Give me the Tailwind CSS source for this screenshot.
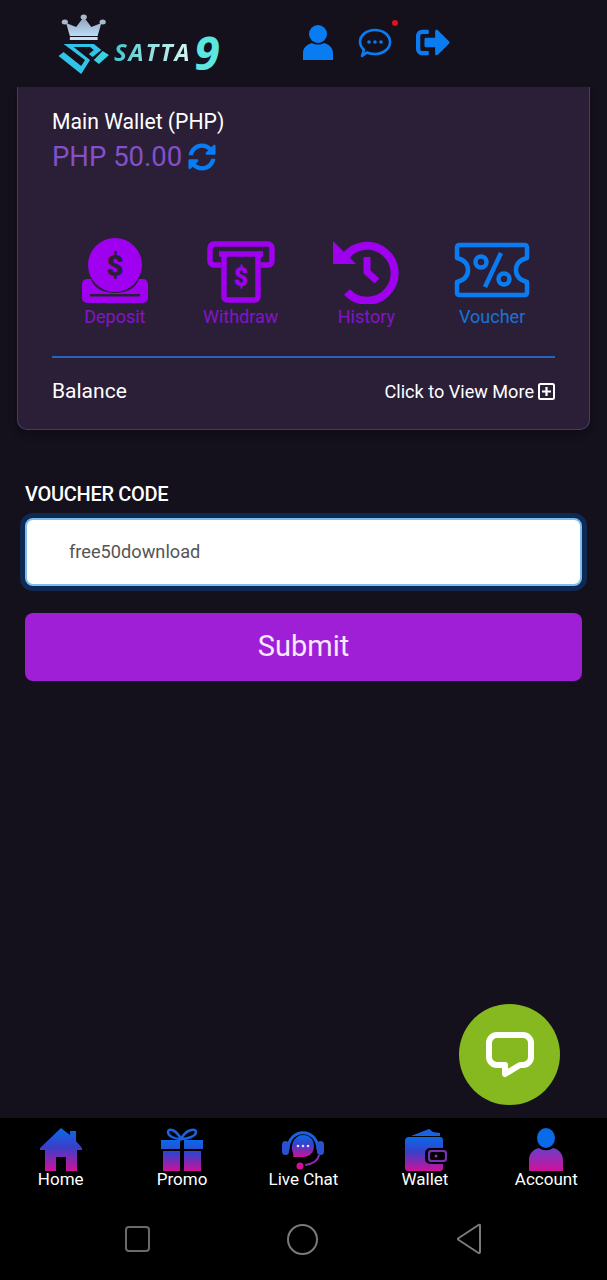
<!DOCTYPE html>
<html lang="en">
<head>
  <meta charset="UTF-8">
  <meta name="viewport" content="width=device-width, initial-scale=1.0">
  <title>Voucher</title>
  <script src="https://cdn.jsdelivr.net/npm/@tailwindcss/browser@4"></script>
</head>
<body class="bg-[#14101c] font-['Roboto',sans-serif] text-white">
<div class="relative h-[1280px] w-[607px] overflow-hidden flex flex-col">

  <!-- svg gradients shared by the nav icons -->
  <svg class="absolute w-0 h-0">
    <defs>
      <linearGradient id="navGrad" x1="0" y1="0" x2="0" y2="1">
        <stop offset="0" stop-color="#0a6ae8"/>
        <stop offset="0.45" stop-color="#3a3fc8"/>
        <stop offset="1" stop-color="#d0109a"/>
      </linearGradient>
      <linearGradient id="bodyGrad" x1="0" y1="0" x2="0" y2="1">
        <stop offset="0" stop-color="#6a3fc8"/>
        <stop offset="1" stop-color="#d0109a"/>
      </linearGradient>
      <linearGradient id="crownGrad" x1="0" y1="0" x2="0" y2="1">
        <stop offset="0" stop-color="#8f9fb8"/>
        <stop offset="1" stop-color="#bcdcf8"/>
      </linearGradient>
    </defs>
  </svg>

  <!-- header -->
  <header class="h-[87px] shrink-0 flex items-start">
    <div class="ml-[56px] mt-[12px] w-[166px] h-[64px] flex items-end">
      <svg class="w-[58px] h-[62px] shrink-0" viewBox="0 0 46 62" preserveAspectRatio="none">
        <g transform="translate(2 0)">
          <path d="M9 22 L6 9 L14 13 L20 3 L26 13 L34 9 L31 22 Z" fill="url(#crownGrad)"/>
          <circle cx="20" cy="3" r="2.500" fill="#a9b8cc"/><circle cx="5" cy="8" r="2.500" fill="#a9b8cc"/><circle cx="35" cy="8" r="2.500" fill="#a9b8cc"/>
          <rect x="9" y="23" width="22" height="3" fill="#c4e0f8"/>
        </g>
        <path d="M6 30 H30 L36 36 L29 43 L26 40 L30 36 L27 33 H14 L27 46 L20 60 L2 42 L6 38 L20 52 L23 46 Z" fill="#2fc4e8"/>
        <path d="M37 37 L42 41 L34 50 L30 46 Z" fill="#39d0e0"/>
      </svg>
      <div class="mb-[4px] flex items-center h-[40px] italic font-bold leading-none font-['Open_Sans',sans-serif]">
        <span class="text-[24px] tracking-[1.800px] bg-linear-to-r from-[#38c8d0] to-[#d8f6f0] bg-clip-text text-transparent">SATTA</span>
        <span class="text-[46px] ml-[3px] text-[#5ce6e0]">9</span>
      </div>
    </div>
    <div class="ml-[81px] mt-[25px] flex items-start">
      <svg class="w-[30px] h-[35px]" viewBox="0 0 30 35" fill="#0a7cf2">
        <circle cx="15" cy="9" r="9"/>
        <path d="M0 35 V28 C0 22 5 19 9 18 C12 20 18 20 21 18 C25 19 30 22 30 28 V35 Z"/>
      </svg>
      <div class="relative ml-[25px] mt-[3px]">
        <svg class="w-[34px] h-[30px]" viewBox="0 0 34 30" fill="none">
          <path d="M4 28 L6 22 C3 19 2 16.500 2 14 C2 7 9 2 17 2 C25 2 32 7 32 14 C32 21 25 26 17 26 C14 26 11 25.500 9 24.500 Z" stroke="#0a7cf2" stroke-width="2.600" stroke-linejoin="round"/>
          <circle cx="11" cy="14" r="1.800" fill="#0a7cf2"/><circle cx="17" cy="14" r="1.800" fill="#0a7cf2"/><circle cx="23" cy="14" r="1.800" fill="#0a7cf2"/>
        </svg>
        <span class="absolute right-[-6px] top-[-8px] w-[6px] h-[6px] rounded-full bg-[#e01020]"></span>
      </div>
      <svg class="w-[34px] h-[27px] ml-[24px] mt-[4px]" viewBox="0 0 512 400">
        <path transform="translate(0 -56)" fill="#0a7cf2" d="M497 273L329 441c-15 15-41 4.500-41-17v-96H152c-13.300 0-24-10.700-24-24v-96c0-13.300 10.700-24 24-24h136V88c0-21.400 25.900-32 41-17l168 168c9.300 9.400 9.300 24.600 0 34zM192 436v-40c0-6.600-5.400-12-12-12H96c-17.700 0-32-14.300-32-32V160c0-17.700 14.300-32 32-32h84c6.600 0 12-5.400 12-12V76c0-6.600-5.400-12-12-12H96c-53 0-96 43-96 96v192c0 53 43 96 96 96h84c6.600 0 12-5.400 12-12z"/>
      </svg>
    </div>
  </header>

  <!-- wallet card -->
  <section class="mx-[17px] h-[343px] shrink-0 bg-[#2b1f38] border border-t-0 border-[#4a3a68] rounded-b-[10px] px-[34px] shadow-[0_4px_8px_rgba(0,0,0,0.25)]">
    <p class="mt-[21px] text-[21.200px] leading-[28px]">Main Wallet (PHP)</p>
    <div class="mt-[3px] flex items-center h-[36px]">
      <span class="text-[27.500px] leading-[36px] text-[#8350c8]">PHP 50.00</span>
      <svg class="w-[28px] h-[28px] ml-[6px]" viewBox="0 0 512 512">
        <path fill="#0a7cf2" d="M370.720 133.280C339.458 104.008 298.888 87.962 255.848 88c-77.458.068-144.328 53.178-162.791 126.850-1.344 5.363-6.122 9.150-11.651 9.150H24.103c-7.498 0-13.194-6.807-11.807-14.176C33.933 94.924 134.813 8 256 8c66.448 0 126.791 26.136 171.315 68.685L463.030 40.970C478.149 25.851 504 36.559 504 57.941V192c0 13.255-10.745 24-24 24H345.941c-21.382 0-32.090-25.851-16.971-40.971l41.750-41.749zM32 296h134.059c21.382 0 32.090 25.851 16.971 40.971l-41.750 41.750c31.262 29.273 71.835 45.319 114.876 45.280 77.418-.07 144.315-53.144 162.787-126.849 1.344-5.363 6.122-9.150 11.651-9.150h57.304c7.498 0 13.194 6.807 11.807 14.176C478.067 417.076 377.187 504 256 504c-66.448 0-126.791-26.136-171.315-68.685L48.970 471.030C33.851 486.149 8 475.441 8 454.059V320c0-13.255 10.745-24 24-24z"/>
      </svg>
    </div>

    <div class="mt-[63px] grid grid-cols-4 h-[93px]">
      <div class="flex flex-col items-center">
        <svg class="w-[68px] h-[66px]" viewBox="0 0 68 66">
          <path d="M6 41 H10 C13 50 22 55 34 55 C46 55 55 50 58 41 H62 A5 5 0 0 1 67 46 V60 A5 5 0 0 1 62 65 H6 A5 5 0 0 1 1 60 V46 A5 5 0 0 1 6 41 Z" fill="#a000f0"/>
          <circle cx="34" cy="27" r="27" fill="#a000f0"/>
          <rect x="9" y="56" width="50" height="2.500" fill="#2b1f38"/>
          <text x="34" y="38" text-anchor="middle" font-family="Roboto, sans-serif" font-weight="900" font-size="30" fill="#2b1f38">$</text>
        </svg>
        <span class="mt-[1px] text-[18px] leading-[24px] text-[#8314c8]">Deposit</span>
      </div>
      <div class="flex flex-col items-center">
        <svg class="w-[68px] h-[66px]" viewBox="0 0 68 66" fill="none">
          <path d="M14 27 H7 A4 4 0 0 1 3 23 V10 A4 4 0 0 1 7 6 H61 A4 4 0 0 1 65 10 V23 A4 4 0 0 1 61 27 H54" stroke="#a000f0" stroke-width="5.500"/>
          <path d="M12 16 H56" stroke="#a000f0" stroke-width="5.500"/>
          <path d="M17 16 V59 A3 3 0 0 0 20 62 H48 A3 3 0 0 0 51 59 V16" stroke="#a000f0" stroke-width="5.500"/>
          <text x="34" y="48" text-anchor="middle" font-family="Roboto, sans-serif" font-weight="900" font-size="25" fill="#a000f0">$</text>
        </svg>
        <span class="mt-[1px] text-[18px] leading-[24px] text-[#8314c8]">Withdraw</span>
      </div>
      <div class="flex flex-col items-center">
        <svg class="w-[68px] h-[66px]" viewBox="0 0 68 66" fill="none">
          <path d="M13 19 A27.500 27.500 0 1 1 15 54" stroke="#a000f0" stroke-width="8"/>
          <path d="M1 3 L24 26 H1 Z" fill="#a000f0"/>
          <path d="M35 19 V34 L45 43" stroke="#a000f0" stroke-width="7"/>
        </svg>
        <span class="mt-[1px] text-[18px] leading-[24px] text-[#8314c8]">History</span>
      </div>
      <div class="flex flex-col items-center">
        <svg class="w-[76px] h-[66px]" viewBox="0 0 76 66" fill="none">
          <path d="M5 7 H71 A2 2 0 0 1 73 9 V20 C65 22 62 27 62 32 C62 37 65 42 73 44 V55 A2 2 0 0 1 71 57 H5 A2 2 0 0 1 3 55 V44 C11 42 14 37 14 32 C14 27 11 22 3 20 V9 A2 2 0 0 1 5 7 Z" stroke="#0a7cf2" stroke-width="4.500" stroke-linejoin="round"/>
          <circle cx="27" cy="24" r="5.500" stroke="#0a7cf2" stroke-width="4.500"/>
          <circle cx="50" cy="41" r="5.500" stroke="#0a7cf2" stroke-width="4.500"/>
          <path d="M47 15 L31 49" stroke="#0a7cf2" stroke-width="4.500"/>
        </svg>
        <span class="mt-[1px] text-[18px] leading-[24px] text-[#1a72d8]">Voucher</span>
      </div>
    </div>

    <div class="mt-[25px] h-[2px] bg-[#2a62b8]"></div>
    <div class="mt-[20px] flex items-center justify-between h-[28px]">
      <span class="text-[21px]">Balance</span>
      <span class="flex items-center text-[18.100px]">Click to View More
        <svg class="w-[17px] h-[17px] ml-[4px]" viewBox="0 0 17 17" fill="none" stroke="#ffffff">
          <rect x="1" y="1" width="15" height="15" rx="1.500" stroke-width="2"/>
          <path d="M8.500 4 V13 M4 8.500 H13" stroke-width="2.200"/>
        </svg>
      </span>
    </div>
  </section>

  <!-- voucher form -->
  <form class="mx-[25px] mt-[51px] shrink-0">
    <label class="block text-[20px] leading-[26px] font-medium tracking-[-0.3px]">VOUCHER CODE</label>
    <input type="text" value="free50download" class="mt-[11px] block w-full h-[68px] bg-white text-[18.200px] text-[#555555] pl-[42px] pb-[2px] rounded-[8px] border-2 border-[#7cc0ea] shadow-[0_0_0_5px_#0e2a54] font-['Roboto',sans-serif] outline-none">
    <button type="button" class="mt-[27px] block w-full h-[68px] bg-[#9f1fd6] rounded-[8px] text-[29px] text-[#f8e8ff]">Submit</button>
  </form>

  <!-- livechat bubble -->
  <button class="absolute left-[459px] top-[1004px] w-[101px] h-[101px] rounded-full bg-[#86b81f] flex items-center justify-center">
    <svg class="w-[48px] h-[46px]" viewBox="0 0 48 46" fill="none">
      <path d="M11 3 H37 A8 8 0 0 1 45 11 V25 A8 8 0 0 1 37 33 H34 L19 42 V33 H11 A8 8 0 0 1 3 25 V11 A8 8 0 0 1 11 3 Z" stroke="#ffffff" stroke-width="6" stroke-linejoin="round"/>
    </svg>
  </button>

  <!-- bottom nav + android buttons -->
  <div class="mt-auto bg-black shrink-0 h-[162px]">
    <nav class="grid grid-cols-5 h-[87px] pt-[10px]">
      <a class="flex flex-col items-center">
        <svg class="w-[44px] h-[43px]" viewBox="0 0 44 43" fill="url(#navGrad)">
          <path d="M22 0 L31 7 V3 H37 V13 L43 20 V22 H38 V43 H27 V29 H17 V43 H6 V22 H1 V20 Z"/>
        </svg>
        <span class="text-[17px] leading-[22px] -mt-[3px]">Home</span>
      </a>
      <a class="flex flex-col items-center">
        <svg class="w-[44px] h-[43px]" viewBox="0 0 44 43" fill="none">
          <g fill="url(#navGrad)">
            <path d="M1 12 H20 V21 H1 Z M24 12 H43 V21 H24 Z M3 23 H20 V43 H3 Z M24 23 H41 V43 H24 Z"/>
          </g>
          <path d="M21 11 C14 11 8 8 8 4 C8 0 16 1 21 11 C26 1 36 0 36 4 C36 8 28 11 21 11" stroke="#1a62e0" stroke-width="2.500"/>
        </svg>
        <span class="text-[17px] leading-[22px] -mt-[3px]">Promo</span>
      </a>
      <a class="flex flex-col items-center">
        <svg class="w-[44px] h-[43px]" viewBox="0 0 44 43" fill="none">
          <path d="M7 22 C7 -1 37 -1 37 22" stroke="#1a62e0" stroke-width="3"/>
          <rect x="1" y="13" width="7" height="14" rx="3.500" fill="#2a52d0"/>
          <rect x="36" y="13" width="7" height="14" rx="3.500" fill="#2a52d0"/>
          <path d="M22 7 C30 7 33 13 33 18 C33 25 28 29 22 29 H12 C13 27 12 25 11 22 C10 14 15 7 22 7 Z" fill="url(#navGrad)"/>
          <circle cx="17" cy="18" r="1.300" fill="#dbe4ff"/><circle cx="22" cy="18" r="1.300" fill="#dbe4ff"/><circle cx="27" cy="18" r="1.300" fill="#dbe4ff"/>
          <path d="M38 27 C37 33 31 36 24 37" stroke="#8a2ab0" stroke-width="2"/>
          <circle cx="19" cy="38" r="3.500" fill="#d0109a"/>
        </svg>
        <span class="text-[17px] leading-[22px] -mt-[3px]">Live Chat</span>
      </a>
      <a class="flex flex-col items-center">
        <svg class="w-[44px] h-[43px]" viewBox="0 0 44 43">
          <path d="M8 8 L26 1 L30 4 L37 5 V8 Z" fill="#1a62e0"/>
          <path d="M2 12 A4 4 0 0 1 6 9 H37 A3 3 0 0 1 40 12 V20 H27 A5 5 0 0 0 22 25 V31 A5 5 0 0 0 27 36 H40 V40 A3 3 0 0 1 37 43 H5 A3 3 0 0 1 2 40 Z" fill="url(#navGrad)"/>
          <rect x="25" y="22" width="19" height="12" rx="3" fill="#7a30b8"/>
          <rect x="27" y="24" width="15" height="8" rx="2" fill="#000000"/>
          <circle cx="33" cy="28" r="1.500" fill="#9a30b0"/>
        </svg>
        <span class="text-[17px] leading-[22px] -mt-[3px]">Wallet</span>
      </a>
      <a class="flex flex-col items-center">
        <svg class="w-[44px] h-[43px]" viewBox="0 0 44 43">
          <ellipse cx="22" cy="10" rx="9" ry="10" fill="#0a6ae8"/>
          <path d="M5 43 V32 C5 25 10 21 15 20 C19 23 25 23 29 20 C34 21 39 25 39 32 V43 Z" fill="url(#bodyGrad)"/>
        </svg>
        <span class="text-[17px] leading-[22px] -mt-[3px]">Account</span>
      </a>
    </nav>
    <div class="flex items-center justify-center h-[68px]">
      <div class="w-[25px] h-[26px] rounded-[4px] border-2 border-[#6a6a6a]"></div>
      <div class="ml-[137px] w-[31px] h-[31px] rounded-full border-2 border-[#7a7a7a]"></div>
      <svg class="ml-[137px] w-[28px] h-[32px]" viewBox="0 0 28 32" fill="none">
        <path d="M25 2 V29 A1 1 0 0 1 23.500 30 L3 16.500 V15.500 L23.500 2 A1 1 0 0 1 25 2 Z" stroke="#7a7a7a" stroke-width="2" stroke-linejoin="round"/>
      </svg>
    </div>
  </div>
</div>
</body>
</html>
